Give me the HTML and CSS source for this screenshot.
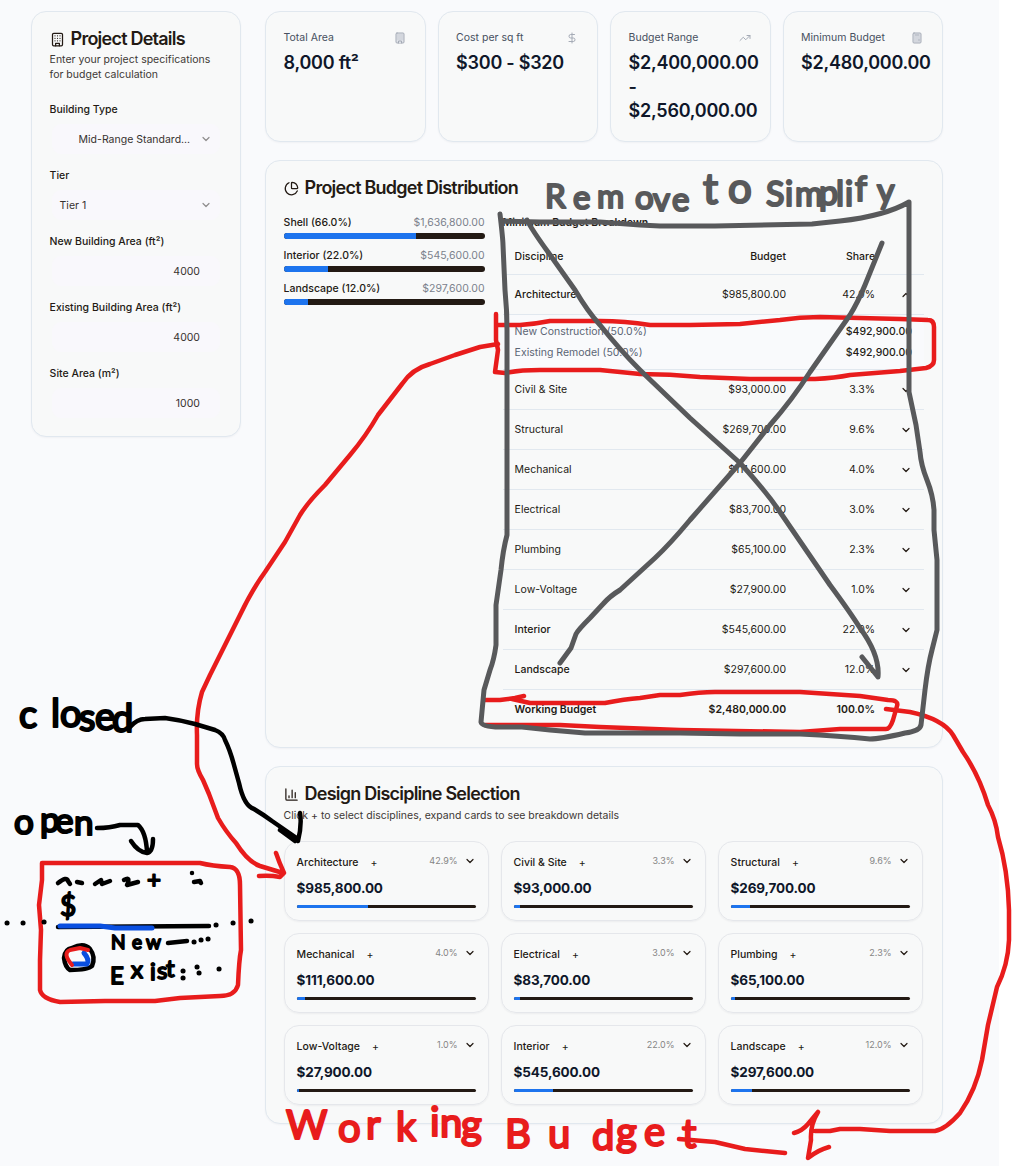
FILE: index.html
```
<!DOCTYPE html>
<html lang="en">
<head>
<meta charset="utf-8">
<title>Project Budget</title>
<link rel="stylesheet" href="styles.css">
</head>
<body>
<svg class="defs" width="0" height="0">
  <symbol id="chev" viewBox="0 0 24 24"><path d="m6 9 6 6 6-6"/></symbol>
  <symbol id="up" viewBox="0 0 24 24"><path d="m18 15-6-6-6 6"/></symbol>
  <symbol id="building" viewBox="0 0 24 24"><rect width="16" height="20" x="4" y="2" rx="2"/><path d="M9 22v-4h6v4M8 6h.01M16 6h.01M12 6h.01M12 10h.01M12 14h.01M16 10h.01M16 14h.01M8 10h.01M8 14h.01"/></symbol>
  <symbol id="dollar" viewBox="0 0 24 24"><path d="M12 2v20M17 5H9.500a3.500 3.500 0 0 0 0 7h5a3.500 3.500 0 0 1 0 7H6"/></symbol>
  <symbol id="trend" viewBox="0 0 24 24"><path d="m22 7-8.500 8.500-5-5L2 17M16 7h6v6"/></symbol>
  <symbol id="calc" viewBox="0 0 24 24"><rect width="16" height="20" x="4" y="2" rx="2"/><path d="M8 6h8M16 14v4M16 10h.01M12 10h.01M8 10h.01M12 14h.01M8 14h.01M12 18h.01M8 18h.01"/></symbol>
  <symbol id="pie" viewBox="0 0 24 24"><path d="M21 12c.552 0 1.005-.449.950-.998a10 10 0 0 0-8.953-8.951c-.550-.055-.998.398-.998.950v8a1 1 0 0 0 1 1z"/><path d="M21.210 15.890A10 10 0 1 1 8 2.830"/></symbol>
  <symbol id="chart" viewBox="0 0 24 24"><path d="M3 3v16a2 2 0 0 0 2 2h16M18 17V9M13 17V5M8 17v-3"/></symbol>
</svg>
<main class="page">
  <aside class="card sidebar">
    <h2 class="title"><svg class="icon"><use href="#building"/></svg>Project Details</h2>
    <p class="desc">Enter your project specifications<br>for budget calculation</p>
    <div class="fields">
      <div class="field"><label>Building Type</label><div class="control select"><span class="clip">Mid-Range Standard...</span><svg class="chev"><use href="#chev"/></svg></div></div>
      <div class="field"><label>Tier</label><div class="control select"><span>Tier 1</span><svg class="chev"><use href="#chev"/></svg></div></div>
      <div class="field"><label>New Building Area (ft²)</label><div class="control number">4000</div></div>
      <div class="field"><label>Existing Building Area (ft²)</label><div class="control number">4000</div></div>
      <div class="field"><label>Site Area (m²)</label><div class="control number">1000</div></div>
    </div>
  </aside>
  <div class="content">
    <section class="stats">
      <div class="card stat"><div class="stat-head">Total Area<svg class="icon filled"><use href="#building"/></svg></div><div class="stat-value">8,000 ft²</div></div>
      <div class="card stat"><div class="stat-head">Cost per sq ft<svg class="icon"><use href="#dollar"/></svg></div><div class="stat-value">$300 - $320</div></div>
      <div class="card stat"><div class="stat-head">Budget Range<svg class="icon"><use href="#trend"/></svg></div><div class="stat-value">$2,400,000.00<br>-<br>$2,560,000.00</div></div>
      <div class="card stat"><div class="stat-head">Minimum Budget<svg class="icon filled"><use href="#calc"/></svg></div><div class="stat-value">$2,480,000.00</div></div>
    </section>
    <section class="card distribution">
      <h2 class="title"><svg class="icon"><use href="#pie"/></svg>Project Budget Distribution</h2>
      <div class="split">
        <div class="shares">
          <div class="share"><div class="share-head"><span>Shell (66.0%)</span><span class="muted">$1,636,800.00</span></div><div class="bar"><i style="width:66%"></i></div></div>
          <div class="share"><div class="share-head"><span>Interior (22.0%)</span><span class="muted">$545,600.00</span></div><div class="bar"><i style="width:22%"></i></div></div>
          <div class="share"><div class="share-head"><span>Landscape (12.0%)</span><span class="muted">$297,600.00</span></div><div class="bar"><i style="width:12%"></i></div></div>
        </div>
        <div class="breakdown">
          <h3 class="subtitle">Minimum Budget Breakdown</h3>
          <div class="row head"><span>Discipline</span><span>Budget</span><span>Share</span></div>
          <div class="row"><span class="medium">Architecture</span><span>$985,800.00</span><span>42.9%</span><svg class="chev"><use href="#up"/></svg></div>
          <div class="detail">
            <div class="line"><span>New Construction (50.0%)</span><b>$492,900.00</b></div>
            <div class="line"><span>Existing Remodel (50.0%)</span><b>$492,900.00</b></div>
          </div>
          <div class="row"><span>Civil &amp; Site</span><span>$93,000.00</span><span>3.3%</span><svg class="chev"><use href="#chev"/></svg></div>
          <div class="row"><span>Structural</span><span>$269,700.00</span><span>9.6%</span><svg class="chev"><use href="#chev"/></svg></div>
          <div class="row"><span>Mechanical</span><span>$111,600.00</span><span>4.0%</span><svg class="chev"><use href="#chev"/></svg></div>
          <div class="row"><span>Electrical</span><span>$83,700.00</span><span>3.0%</span><svg class="chev"><use href="#chev"/></svg></div>
          <div class="row"><span>Plumbing</span><span>$65,100.00</span><span>2.3%</span><svg class="chev"><use href="#chev"/></svg></div>
          <div class="row"><span>Low-Voltage</span><span>$27,900.00</span><span>1.0%</span><svg class="chev"><use href="#chev"/></svg></div>
          <div class="row"><span class="medium">Interior</span><span>$545,600.00</span><span>22.0%</span><svg class="chev"><use href="#chev"/></svg></div>
          <div class="row"><span class="medium">Landscape</span><span>$297,600.00</span><span>12.0%</span><svg class="chev"><use href="#chev"/></svg></div>
          <div class="row total"><span>Working Budget</span><span>$2,480,000.00</span><span>100.0%</span></div>
        </div>
      </div>
    </section>
    <section class="card selection">
      <h2 class="title"><svg class="icon"><use href="#chart"/></svg>Design Discipline Selection</h2>
      <p class="desc">Click + to select disciplines, expand cards to see breakdown details</p>
      <div class="grid">
        <article class="tile"><div class="tile-head"><span>Architecture</span><span class="plus">+</span><span class="pct">42.9%</span><svg class="chev"><use href="#chev"/></svg></div><div class="amount">$985,800.00</div><div class="bar thin"><i style="width:39.700%"></i></div></article>
        <article class="tile"><div class="tile-head"><span>Civil &amp; Site</span><span class="plus">+</span><span class="pct">3.3%</span><svg class="chev"><use href="#chev"/></svg></div><div class="amount">$93,000.00</div><div class="bar thin"><i style="width:3.700%"></i></div></article>
        <article class="tile"><div class="tile-head"><span>Structural</span><span class="plus">+</span><span class="pct">9.6%</span><svg class="chev"><use href="#chev"/></svg></div><div class="amount">$269,700.00</div><div class="bar thin"><i style="width:10.800%"></i></div></article>
        <article class="tile"><div class="tile-head"><span>Mechanical</span><span class="plus">+</span><span class="pct">4.0%</span><svg class="chev"><use href="#chev"/></svg></div><div class="amount">$111,600.00</div><div class="bar thin"><i style="width:4.500%"></i></div></article>
        <article class="tile"><div class="tile-head"><span>Electrical</span><span class="plus">+</span><span class="pct">3.0%</span><svg class="chev"><use href="#chev"/></svg></div><div class="amount">$83,700.00</div><div class="bar thin"><i style="width:3.400%"></i></div></article>
        <article class="tile"><div class="tile-head"><span>Plumbing</span><span class="plus">+</span><span class="pct">2.3%</span><svg class="chev"><use href="#chev"/></svg></div><div class="amount">$65,100.00</div><div class="bar thin"><i style="width:2.600%"></i></div></article>
        <article class="tile"><div class="tile-head"><span>Low-Voltage</span><span class="plus">+</span><span class="pct">1.0%</span><svg class="chev"><use href="#chev"/></svg></div><div class="amount">$27,900.00</div><div class="bar thin"><i style="width:1.100%"></i></div></article>
        <article class="tile"><div class="tile-head"><span>Interior</span><span class="plus">+</span><span class="pct">22.0%</span><svg class="chev"><use href="#chev"/></svg></div><div class="amount">$545,600.00</div><div class="bar thin"><i style="width:22%"></i></div></article>
        <article class="tile"><div class="tile-head"><span>Landscape</span><span class="plus">+</span><span class="pct">12.0%</span><svg class="chev"><use href="#chev"/></svg></div><div class="amount">$297,600.00</div><div class="bar thin"><i style="width:12%"></i></div></article>
      </div>
    </section>
  </div>
</main>

<!-- Review markup layered over the dashboard -->
<svg class="ink" width="1012" height="1166" viewBox="0 0 1012 1166">
  <g class="red">
    <path d="M496 314V340L498 350 495 372 505 373Q520 370 540 370H600L640 374Q670 374 700 377L750 379H815Q835 378 850 375L900 371 926 368Q934 366 934 360V327Q934 320 928 320L900 319 820 317Q800 317 780 320L740 324 690 325H650Q625 321 600 321H550Q535 324 520 325L497 325"/>
    <path d="M498 344 480 347 455 355 430 364Q412 369 402 384L378 415Q366 436 350 455L325 485Q308 502 300 515L285 542 265 572Q252 590 240 615L210 675 202 692Q196 712 197 735V764Q197 770 203 780L209 794 218 818Q226 832 236 843 248 862 260 866L283 873M276 853Q279 862 284 873L280 877Q270 875 259 876"/>
    <path d="M485 700H500L515 698 524 696M512 699 530 703H605Q625 699 640 698L660 695H680Q700 692 715 692H800L860 696 888 700Q899 700 897 706L893 720Q890 729 886 729H840L800 732 680 730 600 727 560 725H485"/>
    <path d="M886 709 910 712Q943 719 953 735L963 752Q979 775 988 805 996 820 998 837 1008 870 1009 910V940Q1008 965 997 987L988 1025 982 1060Q976 1090 960 1113 946 1129 935 1131H890L860 1129H840L830 1131H815M794 1133Q802 1131 808 1124L818 1112Q810 1125 811 1140L808 1158Q818 1150 829 1147M679 1139 715 1142 745 1149 785 1153"/>
    <path d="M42 863H200Q212 866 230 867 240 868 240 885L241 950Q239 960 238 985 235 996 220 996L180 998 155 1001H105L60 1002Q42 999 40 990V960L41 930 39 905 42 880Z"/>
  </g>
  <g class="gray">
    <path d="M500 214Q503 240 503 245L505 290Q507 310 507 330V535Q503 550 501 570L496 605V645Q494 660 490 670L484 690 481 722Q482 727 500 727H522L550 730 585 733H680L740 734 800 734Q840 736 870 739 880 739 905 733 920 731 921 725L925 690Q928 665 932 650L937 630V560L934 530V510Q933 495 927 480 921 465 920 452L916 425 909 392V202Q885 216 840 221L812 224 715 226H660L640 225 600 222H540L503 221"/>
    <path d="M527 220Q532 230 548 252L575 290Q588 312 600 325 620 350 640 370L690 418 740 463Q765 490 780 512L830 585Q850 612 860 628 880 655 878 677L862 657M882 243 865 285Q858 302 850 315L810 372Q792 400 770 425L740 463 690 520Q670 544 655 558L620 590Q610 596 603 604L590 618Q578 630 576 634L571 648 560 663"/>
    <text class="hand" x="545 573 597 635 653 672" y="208 209 208 209 211 211" font-size="33">Remove</text>
    <text class="hand" x="703 728" y="204 203" font-size="42">to</text>
    <text class="hand" x="766 785 795 819 836 845 855 877" y="206 206 206 205 206 206 201 203" font-size="34">Simplify</text>
  </g>
  <g class="black">
    <path d="M130 727Q137 719 145 719L165 718Q180 720 195 724L215 730Q223 733 225 740 230 750 234 765L239 783Q244 806 254 809 264 815 272 821L298 839M300 813Q302 825 298 841L280 830 295 841"/>
    <path d="M97 828Q110 828 120 825H138Q146 832 147 852M131 841Q138 852 147 853 153 852 153 839"/>
    <path d="M58 927 209 926M168 943 187 941M58 883Q67 876 68 881L70 884M77 882 82 883M95 884 101 880 102 884 110 881M124 880Q131 876 127 885L138 882M192 873V873.100M194 882 200 881 201 883"/>
    <path d="M72 948Q84 942 90 949 96 957 92 966 88 970 70 970 65 967 64 958 65 949 72 948Z"/>
    <path class="dots" d="M7 923h.1M23 923h.1M44 922h.1M216 925h.1M233 923h.1M251 921h.1M194 942h.1M201 940h.1M208 939h.1M183 971h.1M183 978h.1M197 967h.1M199 973h.1M219 969h.1"/>
    <text class="hand" x="19 51 60 79 95 112" y="728 727 727 731 730 732" font-size="38">closed</text>
    <text class="hand" x="14 40 55 74" y="834 832 833 835" font-size="35">open</text>
    <text class="hand small" x="147" y="888" font-size="24">+</text>
    <text class="hand small" x="60" y="916" font-size="28">$</text>
    <text class="hand small" x="111 132 146" y="949" font-size="19">New</text>
    <text class="hand small" x="110 131 150 157 166" y="984 978 980 979 977" font-size="24">Exist</text>
  </g>
  <path class="blue" d="M60 926H100L115 928H152M84 953Q90 960 87 964H73"/>
  <path class="red mini" d="M72 965Q62 953 70 950L80 948 88 950"/>
  <g class="red">
    <text class="hand" x="286 338 366 396 430 440 461" y="1139 1142 1139 1141 1136 1137 1139" font-size="40">Working</text>
    <text class="hand" x="505 548 592 616 644 682" y="1148 1148 1150 1146 1146 1148" font-size="40">Budget</text>
  </g>
</svg>
</body>
</html>
```
FILE: styles.css
```
* { box-sizing: border-box; }
body {
  margin: 0;
  position: relative;
  height: 1166px;
  overflow: hidden;
  background: #fff;
  color: #231a14;
  font: 400 10.5px/15px Inter, "Liberation Sans", sans-serif;
}
h2, h3, p { margin: 0; }
svg { fill: none; stroke: currentColor; stroke-width: 2; stroke-linecap: round; stroke-linejoin: round; }
.defs { position: absolute; }
.page {
  width: 999px;
  height: 1166px;
  padding: 11px 56px 0 31px;
  display: flex;
  align-items: flex-start;
  gap: 24px;
  background: #f9fafc;
}
.card {
  border: 1px solid #e1e8ef;
  border-radius: 15px;
  background: #f8f9f9;
  padding: 18px 18px 18px 17.6px;
  box-shadow: 0 1px 2px rgba(15, 23, 42, .04);
}
.sidebar { width: 210px; height: 426px; flex: none; padding-top: 15px; }
.title {
  display: flex;
  align-items: center;
  gap: 6px;
  height: 24px;
  font-size: 18px;
  font-weight: 600;
  line-height: 24px;
  letter-spacing: -.77px;
}
.title .icon { width: 15px; height: 15px; flex: none; }
.desc { color: #3d3835; margin-top: 1px; }
.fields { display: flex; flex-direction: column; gap: 12px; margin-top: 20px; }
.field { height: 54px; }
label { display: block; font-weight: 500; margin-bottom: 7px; }
.control { height: 30px; border-radius: 9px; background: #f9f8fc; margin: 0 2px; color: #37322f; }
.select { display: flex; align-items: center; justify-content: space-between; padding: 0 8px; }
.clip { margin-left: 19px; white-space: nowrap; }
.chev { width: 12px; height: 12px; flex: none; stroke-width: 2.4; }
.select .chev { color: #8f8d8d; }
.number { text-align: right; padding: 8px 20px 0 0; }

.content { flex: 1; min-width: 0; }
.stats { display: grid; grid-template-columns: repeat(4, minmax(0, 1fr)); gap: 12px; }
.stat { height: 131px; }
.stat-head { display: flex; align-items: center; justify-content: space-between; color: #475060; margin-bottom: 6px; white-space: nowrap; }
.stat-head .icon { width: 12px; height: 12px; color: #a5abb6; margin-right: 1px; }
.stat-head .filled { fill: #dfe2e8; }
.stat-value { color: #0f172a; font-size: 18px; font-weight: 600; line-height: 24px; letter-spacing: -.25px; white-space: nowrap; }

.distribution { height: 588px; margin-top: 18px; padding-top: 15px; }
.split { display: grid; grid-template-columns: 201px 1fr; gap: 18px; margin-top: 15px; }
.shares { display: flex; flex-direction: column; gap: 9px; }
.share-head { display: flex; justify-content: space-between; margin-bottom: 3px; font-weight: 500; }
.muted { color: #7b818c; font-weight: 400; }
.bar { height: 6px; border-radius: 3px; overflow: hidden; background: #231a14; }
.bar i { display: block; height: 100%; background: #1d74ee; }
.bar.thin { height: 3px; }
.subtitle { font-size: 10.5px; line-height: 15px; font-weight: 600; }
.row {
  height: 40px;
  border-bottom: 1px solid #e1e8ef;
  display: grid;
  grid-template-columns: 160px 111.500px 89px 36.500px;
  align-items: center;
  padding: 0 12px;
}
.row span + span { text-align: right; }
.row .chev { justify-self: end; }
.row.head { height: 37px; margin-top: 8px; font-weight: 500; }
.medium { font-weight: 500; }
.row.total { font-weight: 600; border-bottom: 0; height: 39px; }
.detail { height: 55px; padding: 9px 12px; background: #f9fafc; border-bottom: 1px solid #e1e8ef; display: grid; row-gap: 6px; }
.line { display: flex; justify-content: space-between; color: #5b6574; }
.line b { font-weight: 500; color: #231a14; }

.selection { height: 358px; margin-top: 18px; padding-top: 15px; }
.selection .desc { margin-top: 2px; }
.grid { display: grid; grid-template-columns: repeat(3, 205px); gap: 12px; margin-top: 18px; }
.tile { height: 80px; border: 1px solid #e5e7eb; border-radius: 15px; padding: 12px; box-shadow: 0 1px 2px rgba(15, 23, 42, .05); }
.tile-head { display: flex; align-items: center; height: 17px; font-weight: 500; }
.plus { margin-left: 12px; font-weight: 400; }
.pct { margin: -4px 6px 0 auto; font-size: 9px; color: #858585; font-weight: 400; }
.tile-head .chev { margin-top: -4px; }
.amount { margin-top: 7px; color: #0f172a; font-size: 13.5px; font-weight: 700; line-height: 20px; letter-spacing: -.14px; }
.tile .bar { margin-top: 7px; }

.ink { position: absolute; left: 0; top: 0; pointer-events: none; }
.ink .red { stroke: #e81c1c; fill: none; stroke-width: 4.5; }
.ink .gray { stroke: #58595b; stroke-width: 5; }
.ink .black { stroke: #000; stroke-width: 4.5; }
.ink .blue { stroke: #0a4fe0; stroke-width: 5; }
.ink .mini { stroke-width: 4; }
.dots { stroke-width: 5; }
.ink .hand { font-family: Lato, sans-serif; stroke-width: 2.2; }
.ink .hand.small { stroke-width: 1.8; }
.red .hand { fill: #e81c1c; }
.gray .hand { fill: #58595b; }
.black .hand { fill: #000; }
```
